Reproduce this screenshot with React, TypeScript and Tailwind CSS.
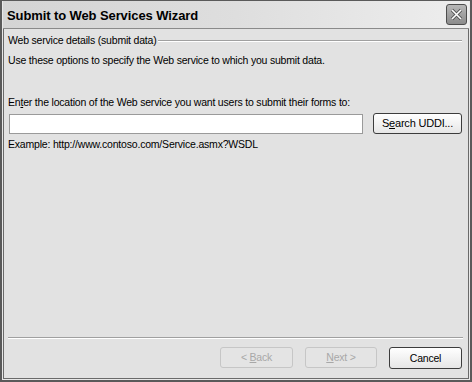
export default function App() {
  const font = { fontFamily: '"Liberation Sans", Arial, sans-serif' }

  return (
    <div
      className="w-[472px] h-[382px] flex flex-col border-2 border-t border-[#5a5a5a] text-[10.5px] leading-[13px] tracking-[-0.2px] text-black"
      style={font}
    >
      <div className="flex-1 flex flex-col bg-[#e2e2e2] border-x border-b border-[#e8e8e8]">
        {/* Title bar */}
        <div className="h-[28px] shrink-0 flex items-center justify-between pl-[4px] pr-[2px] bg-gradient-to-r from-[#d4d4d4] via-[#dedede] to-[#eeeeee] border-b border-[#8a8a8a]">
          <span className="font-bold text-[13px] tracking-[-0.1px] mt-[2px]">Submit to Web Services Wizard</span>
          <button className="w-[21px] h-[21px] flex items-center justify-center rounded-[3px] border border-[#4d4d4d] bg-gradient-to-b from-[#b8b8b8] to-[#8c8c8c]">
            <svg width="13" height="13" viewBox="0 0 13 13">
              <path d="M2 2 L11 11 M11 2 L2 11" stroke="#555" strokeWidth="3.2" />
              <path d="M2 2 L11 11 M11 2 L2 11" stroke="#fff" strokeWidth="1.6" />
            </svg>
          </button>
        </div>

        {/* Body */}
        <div className="flex-1 flex flex-col border-x border-b border-[#6a6a6a]">
          <div className="flex-1 flex flex-col pl-[4px] pr-[6px] pt-[5px]">
            <div className="flex items-center gap-[2px]">
              <span>Web service details (submit data)</span>
              <div className="flex-1 h-[2px] border-t border-[#a0a0a0] border-b border-b-white" />
            </div>
            <p className="mt-[7px]">Use these options to specify the Web service to which you submit data.</p>

            <p className="mt-[29px]">
              En<span className="underline">t</span>er the location of the Web service you want users to submit their forms to:
            </p>
            <div className="mt-[4px] flex items-center gap-[10px]">
              <input className="ml-px w-[354px] h-[20px] bg-white border border-[#9a9a9a] outline-none" />
              <button className="w-[89px] h-[21px] rounded-[3px] border border-[#3c3c3c] bg-gradient-to-b from-white to-[#e6e6e6] text-[11px]">
                S<span className="underline">e</span>arch UDDI...
              </button>
            </div>
            <p className="mt-[4px]">Example: http://www.contoso.com/Service.asmx?WSDL</p>
          </div>

          {/* Footer */}
          <div className="pl-[4px] pr-[5px] pb-[9px]">
            <div className="h-[2px] border-t border-[#a0a0a0] border-b border-b-white" />
            <div className="mt-[8px] pr-px flex justify-end gap-[12px]">
              <button className="w-[73px] h-[21px] rounded-[3px] border border-[#c6c6c6] text-[#a8a8a8] bg-[#e4e4e4]">
                &lt; <span className="underline">B</span>ack
              </button>
              <button className="w-[72px] h-[21px] rounded-[3px] border border-[#c6c6c6] text-[#a8a8a8] bg-[#e4e4e4]">
                <span className="underline">N</span>ext &gt;
              </button>
              <button className="w-[73px] h-[22px] rounded-[3px] border border-[#3c3c3c] bg-gradient-to-b from-white to-[#e6e6e6]">
                Cancel
              </button>
            </div>
          </div>
        </div>
      </div>
    </div>
  )
}
